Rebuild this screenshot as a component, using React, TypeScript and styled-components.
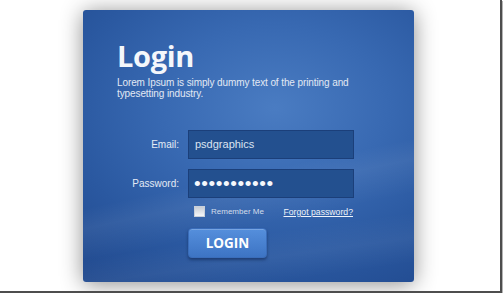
import React from 'react';
import styled, { createGlobalStyle } from 'styled-components';

const GlobalStyle = createGlobalStyle`
  html, body {
    margin: 0;
    padding: 0;
    background: #ffffff;
  }
  body {
    font-family: 'Liberation Sans', Arial, sans-serif;
  }
`;

const Frame = styled.div`
  box-sizing: border-box;
  width: 502px;
  height: 293px;
  padding-top: 10px;
  border-right: 2px solid #4e4e4e;
  border-bottom: 2px solid #4e4e4e;
  box-shadow: 1px 1px 0 #b4b4b4;
  background: #ffffff;
  overflow: hidden;
`;

const Card = styled.section`
  box-sizing: border-box;
  width: 331px;
  height: 272px;
  margin-left: 83px;
  padding: 31px 0 0 34px;
  border-radius: 3px;
  background:
    linear-gradient(168deg, transparent 58%, rgba(255, 255, 255, 0.06) 64%, transparent 74%),
    linear-gradient(172deg, transparent 78%, rgba(255, 255, 255, 0.05) 86%, transparent 94%),
    radial-gradient(ellipse 90% 80% at 58% 36%, #4a7cc2 0%, #3869b2 38%, #2a58a0 70%, #214a8f 100%);
  box-shadow: 0 2px 22px rgba(0, 0, 0, 0.45);
  color: #ffffff;
`;

const Title = styled.h1`
  margin: 0;
  font-family: 'Open Sans', 'Liberation Sans', sans-serif;
  font-weight: 700;
  font-size: 29px;
  line-height: 30px;
  letter-spacing: -0.3px;
  color: #f4f7fb;
`;

const Subtitle = styled.p`
  margin: 6px 0 0;
  width: 236px;
  font-size: 10px;
  line-height: 11px;
  letter-spacing: -0.1px;
  color: #e2e9f4;
`;

const Form = styled.form`
  display: grid;
  grid-template-columns: 62px 166px;
  column-gap: 9px;
  row-gap: 10px;
  margin: 31px 0 0;
  align-items: center;
`;

const Label = styled.label`
  text-align: right;
  font-size: 10px;
  color: #e4ebf5;
`;

const Field = styled.input`
  box-sizing: border-box;
  width: 166px;
  height: 29px;
  margin: 0;
  padding: 0 0 2px 6px;
  border: 1px solid #1b3f7a;
  background: #23508f;
  color: #dbe4f1;
  font-family: 'Liberation Sans', Arial, sans-serif;
  font-size: 11px;
  outline: none;
`;

const Secret = styled(Field)`
  padding: 0 0 0 5px;
  font-size: 19px;
  letter-spacing: 0.6px;
  color: #f5f8fc;
`;

const Options = styled.div`
  grid-column: 2;
  display: flex;
  align-items: center;
  justify-content: space-between;
  margin-top: -2px;
  padding: 0 1px 0 6px;
`;

const Remember = styled.label`
  display: flex;
  align-items: center;
  gap: 6px;
  font-size: 8px;
  color: #d3ddeb;
`;

const Box = styled.span`
  width: 9px;
  height: 9px;
  border: 1px solid #c9d0da;
  background: linear-gradient(#c8ced6, #f4f6f8);
`;

const Forgot = styled.a`
  font-size: 8.7px;
  color: #eef3fa;
  text-decoration: underline;
`;

const Submit = styled.button`
  grid-column: 2;
  justify-self: start;
  width: 79px;
  height: 30px;
  margin-top: 1px;
  border: 1px solid #3a6dba;
  border-radius: 4px;
  background: linear-gradient(#558fdc, #3d74c4);
  box-shadow: 0 2px 3px rgba(10, 30, 70, 0.5), inset 0 1px 0 rgba(255, 255, 255, 0.2);
  color: #ffffff;
  font-family: 'Open Sans', 'Liberation Sans', sans-serif;
  font-weight: 700;
  font-size: 13.5px;
  padding: 0;
`;

export default function App() {
  return (
    <>
      <GlobalStyle />
      <Frame>
        <Card>
          <Title>Login</Title>
          <Subtitle>Lorem Ipsum is simply dummy text of the printing and typesetting industry.</Subtitle>
          <Form onSubmit={(e) => e.preventDefault()}>
            <Label htmlFor="email">Email:</Label>
            <Field id="email" defaultValue="psdgraphics" />
            <Label htmlFor="password">Password:</Label>
            <Secret id="password" type="password" defaultValue="psdgraphics" />
            <Options>
              <Remember>
                <Box />
                Remember Me
              </Remember>
              <Forgot href="#">Forgot password?</Forgot>
            </Options>
            <Submit type="submit">LOGIN</Submit>
          </Form>
        </Card>
      </Frame>
    </>
  );
}
